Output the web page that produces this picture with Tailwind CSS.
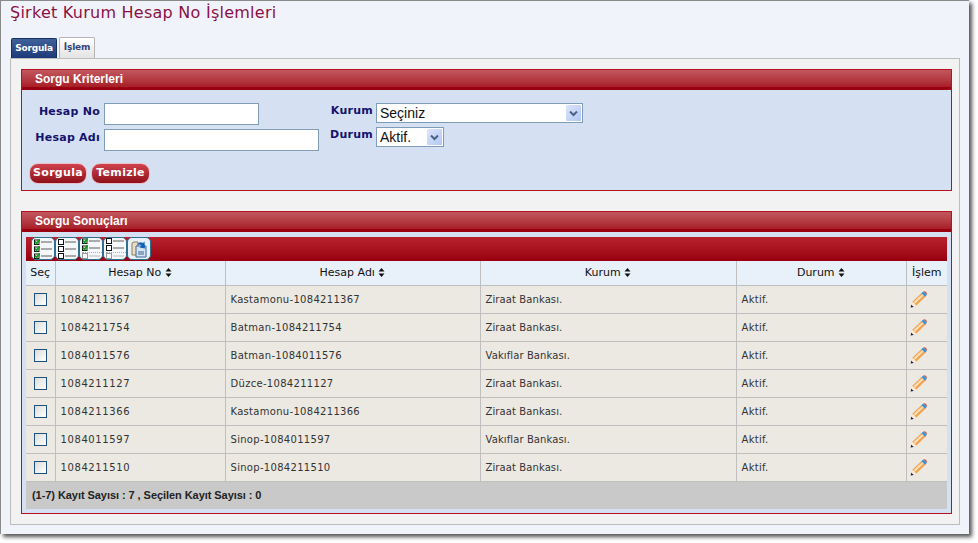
<!DOCTYPE html>
<html lang="en">
<head>
<meta charset="utf-8">
<title>Şirket Kurum Hesap No İşlemleri</title>
<script src="https://cdn.jsdelivr.net/npm/@tailwindcss/browser@4"></script>
</head>
<body class="bg-white min-h-[543px] font-['DejaVu_Sans',sans-serif] overflow-hidden">
<svg class="hidden">
  <symbol id="pencil" viewBox="0 0 16 16">
    <path d="M1 15 L2.3 10 L11.3 1.5 L15 5 L6 13.7 Z" fill="#f2a24e"/>
    <path d="M3.4 10.4 L11.6 2.8 L13 4 L4.8 12 Z" fill="#fde0b8"/>
    <path d="M10.8 2 L12.6 .5 L15.8 3.6 L14.4 5.4 Z" fill="#2f97dc"/>
    <path d="M12.6 .5 L14.2 .3 L15.8 1.9 L15.8 3.6 Z" fill="#c9503f"/>
    <path d="M2.3 10 L6 13.7 L1 15 Z" fill="#fbeed8"/>
    <path d="M.6 15.6 L1.2 13 L3.4 15 Z" fill="#141c44"/>
  </symbol>
  <symbol id="sort" viewBox="0 0 7 9">
    <path d="M3.5 0 L6.5 3.4 H.5 Z M3.5 9 L.5 5.6 H6.5 Z" fill="#111"/>
  </symbol>
  <symbol id="chev" viewBox="0 0 9 7">
    <path d="M1 1.5 L4.5 5 L8 1.5" fill="none" stroke="#4d6185" stroke-width="2"/>
  </symbol>
  <symbol id="tick" viewBox="0 0 6 6">
    <rect x=".5" y="1" width="4.5" height="4.5" fill="#fff" stroke="#111"/>
    <path d="M1 2.6 L2.6 4.4 L6 .2" fill="none" stroke="#0f9a1a" stroke-width="1.8"/>
  </symbol>
  <symbol id="box" viewBox="0 0 6 6">
    <rect x=".5" y=".5" width="5" height="5" fill="#fff" stroke="#111"/>
  </symbol>
</svg>

<div class="w-[969px] h-[534px] bg-[#f0f4fa] border-l border-t border-[#8a8a8a] shadow-[3px_3px_4px_#555] pl-[9px] pt-[2px]">
  <h1 class="h-[20px] text-[16px] leading-[20px] tracking-[.25px] font-normal text-[#8c1045]">Şirket Kurum Hesap No İşlemleri</h1>

  <div class="mt-[15px] h-[20px] pl-[1px] flex items-end gap-[2px] relative z-10">
    <div class="w-[46px] h-[20px] bg-gradient-to-b from-[#3f6199] to-[#1d3a78] border border-b-0 border-[#16305f] rounded-t-[2px] flex items-center justify-center text-[9px] font-bold tracking-[-.2px] text-white">Sorgula</div>
    <div class="w-[36px] h-[21px] bg-gradient-to-b from-[#ffffff] to-[#e3e3e3] border border-b-0 border-[#b5b5b5] rounded-t-[2px] flex items-center justify-center text-[9px] font-bold tracking-[-.2px] text-[#33457a]">İşlem</div>
  </div>

  <div class="w-[950px] h-[467px] bg-[#f2f2f2] border border-[#bdbdbd] pl-[10px] pt-[10px]">
    <section class="w-[931px] h-[122px] border border-[#b5121f] bg-[#d5e1f2] flex flex-col">
      <h2 class="h-[20px] shrink-0 pl-[13px] bg-gradient-to-b from-[#c2575f] to-[#a81c28] border-b-[3px] border-[#990010] font-['Liberation_Sans',sans-serif] text-[12px] leading-[19px] font-bold text-white">Sorgu Kriterleri</h2>
      <div class="flex pt-[13px]">
        <div class="w-[300px] flex flex-col gap-[4px] text-[11px] font-bold tracking-[.25px] text-[#14126e]">
          <div class="flex gap-[4px]">
            <label class="w-[78px] text-right pt-[1px]">Hesap No</label>
            <input type="text" class="w-[155px] h-[22px] bg-white border border-[#7f9db9]">
          </div>
          <div class="flex gap-[4px]">
            <label class="w-[78px] text-right pt-[1px]">Hesap Adı</label>
            <input type="text" class="w-[215px] h-[22px] bg-white border border-[#7f9db9]">
          </div>
        </div>
        <div class="flex flex-col gap-[4px] text-[11px] font-bold tracking-[.25px] text-[#14126e]">
          <div class="flex gap-[3px]">
            <label class="w-[51px] text-right">Kurum</label>
            <div class="w-[207px] h-[20px] bg-white border border-[#7f9db9] flex items-center justify-between pl-[3px] pr-[1px] font-['Liberation_Sans',sans-serif] text-[14px] font-normal tracking-normal text-[#111]">
              Seçiniz
              <span class="w-[15px] h-[16px] bg-gradient-to-br from-[#dbe5fb] to-[#b3c8f4] rounded-[1px] flex items-center justify-center"><svg class="w-[9px] h-[7px]"><use href="#chev"/></svg></span>
            </div>
          </div>
          <div class="flex gap-[3px]">
            <label class="w-[51px] text-right">Durum</label>
            <div class="w-[68px] h-[20px] bg-white border border-[#7f9db9] flex items-center justify-between pl-[3px] pr-[1px] font-['Liberation_Sans',sans-serif] text-[14px] font-normal tracking-normal text-[#111]">
              Aktif.
              <span class="w-[15px] h-[16px] bg-gradient-to-br from-[#dbe5fb] to-[#b3c8f4] rounded-[1px] flex items-center justify-center"><svg class="w-[9px] h-[7px]"><use href="#chev"/></svg></span>
            </div>
          </div>
        </div>
      </div>
      <div class="mt-[12px] ml-[7px] flex gap-[4px] text-[11px] font-bold text-white tracking-[.3px]">
        <button class="w-[58px] h-[21px] rounded-[9px] bg-gradient-to-b from-[#d0424e] to-[#8e0e1a] border border-[#e8c2c6]">Sorgula</button>
        <button class="w-[59px] h-[21px] rounded-[9px] bg-gradient-to-b from-[#d0424e] to-[#8e0e1a] border border-[#e8c2c6]">Temizle</button>
      </div>
    </section>

    <section class="mt-[20px] w-[931px] h-[303px] border border-[#b5121f] bg-[#d5e1f2] flex flex-col">
      <h2 class="h-[20px] shrink-0 pl-[13px] bg-gradient-to-b from-[#c2575f] to-[#a81c28] border-b-[3px] border-[#990010] font-['Liberation_Sans',sans-serif] text-[12px] leading-[19px] font-bold text-white">Sorgu Sonuçları</h2>
      <div class="mt-[5px] ml-[4px] w-[921px]">
        <div class="h-[24px] bg-gradient-to-b from-[#b8202c] to-[#99000f] pl-[5px] flex items-start">
          <span class="w-[24px] h-[23px] shrink-0 bg-[#f4f8fb] border border-[#2f6f8f] rounded-[5px] flex flex-col gap-[1px] justify-center pl-[2px]">
            <span class="flex items-center gap-[1px]"><svg class="w-[6px] h-[6px]"><use href="#tick"/></svg><span class="w-[11px] h-[2px] bg-[#aaa]"></span></span>
            <span class="flex items-center gap-[1px]"><svg class="w-[6px] h-[6px]"><use href="#tick"/></svg><span class="w-[11px] h-[2px] bg-[#aaa]"></span></span>
            <span class="flex items-center gap-[1px]"><svg class="w-[6px] h-[6px]"><use href="#tick"/></svg><span class="w-[11px] h-[2px] bg-[#aaa]"></span></span>
          </span>
          <span class="w-[24px] h-[23px] shrink-0 bg-[#f4f8fb] border border-[#2f6f8f] rounded-[5px] flex flex-col gap-[1px] justify-center pl-[2px]">
            <span class="flex items-center gap-[1px]"><svg class="w-[6px] h-[6px]"><use href="#box"/></svg><span class="w-[11px] h-[2px] bg-[#aaa]"></span></span>
            <span class="flex items-center gap-[1px]"><svg class="w-[6px] h-[6px]"><use href="#box"/></svg><span class="w-[11px] h-[2px] bg-[#aaa]"></span></span>
            <span class="flex items-center gap-[1px]"><svg class="w-[6px] h-[6px]"><use href="#box"/></svg><span class="w-[11px] h-[2px] bg-[#aaa]"></span></span>
          </span>
          <span class="w-[24px] h-[23px] shrink-0 bg-[#f4f8fb] border border-[#2f6f8f] rounded-[5px] flex flex-col gap-[1px] justify-center pl-[2px]">
            <span class="flex items-center gap-[1px]"><svg class="w-[6px] h-[6px]"><use href="#tick"/></svg><span class="w-[11px] h-[2px] bg-[#aaa]"></span></span>
            <span class="flex items-center gap-[1px]"><svg class="w-[6px] h-[6px]"><use href="#tick"/></svg><span class="w-[11px] h-[2px] bg-[#aaa]"></span></span>
            <span class="flex items-center gap-[1px] opacity-40 border-t border-dotted border-[#345]"><svg class="w-[6px] h-[6px]"><use href="#box"/></svg><span class="w-[11px] h-[2px] bg-[#aaa]"></span></span>
          </span>
          <span class="w-[24px] h-[23px] shrink-0 bg-[#f4f8fb] border border-[#2f6f8f] rounded-[5px] flex flex-col gap-[1px] justify-center pl-[2px]">
            <span class="flex items-center gap-[1px]"><svg class="w-[6px] h-[6px]"><use href="#box"/></svg><span class="w-[11px] h-[2px] bg-[#aaa]"></span></span>
            <span class="flex items-center gap-[1px]"><svg class="w-[6px] h-[6px]"><use href="#box"/></svg><span class="w-[11px] h-[2px] bg-[#aaa]"></span></span>
            <span class="flex items-center gap-[1px] opacity-40 border-t border-dotted border-[#345]"><svg class="w-[6px] h-[6px]"><use href="#box"/></svg><span class="w-[11px] h-[2px] bg-[#aaa]"></span></span>
          </span>
          <span class="w-[24px] h-[23px] shrink-0 bg-[#e9f1f8] border border-[#2f6f8f] rounded-[5px] flex items-center justify-center">
            <svg viewBox="0 0 20 20" class="w-[20px] h-[20px]">
              <path d="M3 5 Q3 3 5 3 H9 V16 H3 Z" fill="#e8dfc4" stroke="#8a7f60"/>
              <path d="M7 7 H17 V18 H7 Z" fill="#d5e4f2" stroke="#3f6690"/>
              <path d="M9 13 H15 M9 15 H15" stroke="#3f6690"/>
              <path d="M8 6 Q10 2 14 4 L15.5 2.5 L16 9.5 L10.5 8.5 L12.5 6.5 Q10.5 5 8 6 Z" fill="#0f62b8"/>
            </svg>
          </span>
        </div>

        <table class="w-[921px] table-fixed border-collapse text-[10px] tracking-[.3px]">
          <thead>
            <tr class="h-[24px] bg-[#e8f0f9] text-[#111] text-[11px] tracking-normal text-center">
              <th class="w-[29px] border-r border-b border-[#bfbfbf] font-normal">Seç</th>
              <th class="w-[170px] border-r border-b border-[#bfbfbf] font-normal">Hesap No <svg class="inline w-[7px] h-[9px]"><use href="#sort"/></svg></th>
              <th class="w-[255px] border-r border-b border-[#bfbfbf] font-normal">Hesap Adı <svg class="inline w-[7px] h-[9px]"><use href="#sort"/></svg></th>
              <th class="w-[256px] border-r border-b border-[#bfbfbf] font-normal">Kurum <svg class="inline w-[7px] h-[9px]"><use href="#sort"/></svg></th>
              <th class="w-[170px] border-r border-b border-[#bfbfbf] font-normal">Durum <svg class="inline w-[7px] h-[9px]"><use href="#sort"/></svg></th>
              <th class="border-b border-[#bfbfbf] font-normal">İşlem</th>
            </tr>
          </thead>
          <tbody class="bg-[#ebe9e2] text-[#333]">
            <tr class="h-[28px]">
              <td class="border-r border-b border-[#bfbfbf] text-center"><span class="inline-block align-middle w-[13px] h-[13px] border border-[#1c5180] bg-gradient-to-br from-[#dcdcd7] to-[#ffffff]"></span></td>
              <td class="border-r border-b border-[#bfbfbf] pl-[5px] tracking-[.6px]">1084211367</td>
              <td class="border-r border-b border-[#bfbfbf] pl-[5px]">Kastamonu-1084211367</td>
              <td class="border-r border-b border-[#bfbfbf] pl-[5px] tracking-[.1px]">Ziraat Bankası.</td>
              <td class="border-r border-b border-[#bfbfbf] pl-[5px]">Aktif.</td>
              <td class="border-b border-[#bfbfbf] pl-[3px]"><svg class="w-[17px] h-[17px]"><use href="#pencil"/></svg></td>
            </tr>
            <tr class="h-[28px]">
              <td class="border-r border-b border-[#bfbfbf] text-center"><span class="inline-block align-middle w-[13px] h-[13px] border border-[#1c5180] bg-gradient-to-br from-[#dcdcd7] to-[#ffffff]"></span></td>
              <td class="border-r border-b border-[#bfbfbf] pl-[5px] tracking-[.6px]">1084211754</td>
              <td class="border-r border-b border-[#bfbfbf] pl-[5px]">Batman-1084211754</td>
              <td class="border-r border-b border-[#bfbfbf] pl-[5px] tracking-[.1px]">Ziraat Bankası.</td>
              <td class="border-r border-b border-[#bfbfbf] pl-[5px]">Aktif.</td>
              <td class="border-b border-[#bfbfbf] pl-[3px]"><svg class="w-[17px] h-[17px]"><use href="#pencil"/></svg></td>
            </tr>
            <tr class="h-[28px]">
              <td class="border-r border-b border-[#bfbfbf] text-center"><span class="inline-block align-middle w-[13px] h-[13px] border border-[#1c5180] bg-gradient-to-br from-[#dcdcd7] to-[#ffffff]"></span></td>
              <td class="border-r border-b border-[#bfbfbf] pl-[5px] tracking-[.6px]">1084011576</td>
              <td class="border-r border-b border-[#bfbfbf] pl-[5px]">Batman-1084011576</td>
              <td class="border-r border-b border-[#bfbfbf] pl-[5px] tracking-[.1px]">Vakıflar Bankası.</td>
              <td class="border-r border-b border-[#bfbfbf] pl-[5px]">Aktif.</td>
              <td class="border-b border-[#bfbfbf] pl-[3px]"><svg class="w-[17px] h-[17px]"><use href="#pencil"/></svg></td>
            </tr>
            <tr class="h-[28px]">
              <td class="border-r border-b border-[#bfbfbf] text-center"><span class="inline-block align-middle w-[13px] h-[13px] border border-[#1c5180] bg-gradient-to-br from-[#dcdcd7] to-[#ffffff]"></span></td>
              <td class="border-r border-b border-[#bfbfbf] pl-[5px] tracking-[.6px]">1084211127</td>
              <td class="border-r border-b border-[#bfbfbf] pl-[5px]">Düzce-1084211127</td>
              <td class="border-r border-b border-[#bfbfbf] pl-[5px] tracking-[.1px]">Ziraat Bankası.</td>
              <td class="border-r border-b border-[#bfbfbf] pl-[5px]">Aktif.</td>
              <td class="border-b border-[#bfbfbf] pl-[3px]"><svg class="w-[17px] h-[17px]"><use href="#pencil"/></svg></td>
            </tr>
            <tr class="h-[28px]">
              <td class="border-r border-b border-[#bfbfbf] text-center"><span class="inline-block align-middle w-[13px] h-[13px] border border-[#1c5180] bg-gradient-to-br from-[#dcdcd7] to-[#ffffff]"></span></td>
              <td class="border-r border-b border-[#bfbfbf] pl-[5px] tracking-[.6px]">1084211366</td>
              <td class="border-r border-b border-[#bfbfbf] pl-[5px]">Kastamonu-1084211366</td>
              <td class="border-r border-b border-[#bfbfbf] pl-[5px] tracking-[.1px]">Ziraat Bankası.</td>
              <td class="border-r border-b border-[#bfbfbf] pl-[5px]">Aktif.</td>
              <td class="border-b border-[#bfbfbf] pl-[3px]"><svg class="w-[17px] h-[17px]"><use href="#pencil"/></svg></td>
            </tr>
            <tr class="h-[28px]">
              <td class="border-r border-b border-[#bfbfbf] text-center"><span class="inline-block align-middle w-[13px] h-[13px] border border-[#1c5180] bg-gradient-to-br from-[#dcdcd7] to-[#ffffff]"></span></td>
              <td class="border-r border-b border-[#bfbfbf] pl-[5px] tracking-[.6px]">1084011597</td>
              <td class="border-r border-b border-[#bfbfbf] pl-[5px]">Sinop-1084011597</td>
              <td class="border-r border-b border-[#bfbfbf] pl-[5px] tracking-[.1px]">Vakıflar Bankası.</td>
              <td class="border-r border-b border-[#bfbfbf] pl-[5px]">Aktif.</td>
              <td class="border-b border-[#bfbfbf] pl-[3px]"><svg class="w-[17px] h-[17px]"><use href="#pencil"/></svg></td>
            </tr>
            <tr class="h-[28px]">
              <td class="border-r border-b border-[#bfbfbf] text-center"><span class="inline-block align-middle w-[13px] h-[13px] border border-[#1c5180] bg-gradient-to-br from-[#dcdcd7] to-[#ffffff]"></span></td>
              <td class="border-r border-b border-[#bfbfbf] pl-[5px] tracking-[.6px]">1084211510</td>
              <td class="border-r border-b border-[#bfbfbf] pl-[5px]">Sinop-1084211510</td>
              <td class="border-r border-b border-[#bfbfbf] pl-[5px] tracking-[.1px]">Ziraat Bankası.</td>
              <td class="border-r border-b border-[#bfbfbf] pl-[5px]">Aktif.</td>
              <td class="border-b border-[#bfbfbf] pl-[3px]"><svg class="w-[17px] h-[17px]"><use href="#pencil"/></svg></td>
            </tr>
          </tbody>
        </table>
        <div class="h-[27px] bg-[#c9c9c9] pl-[6px] font-['Liberation_Sans',sans-serif] text-[11px] font-bold leading-[26px] tracking-[-.06px] text-[#222]">(1-7) Kayıt Sayısı : 7 , Seçilen Kayıt Sayısı : 0</div>
      </div>
    </section>
  </div>
</div>
</body>
</html>
